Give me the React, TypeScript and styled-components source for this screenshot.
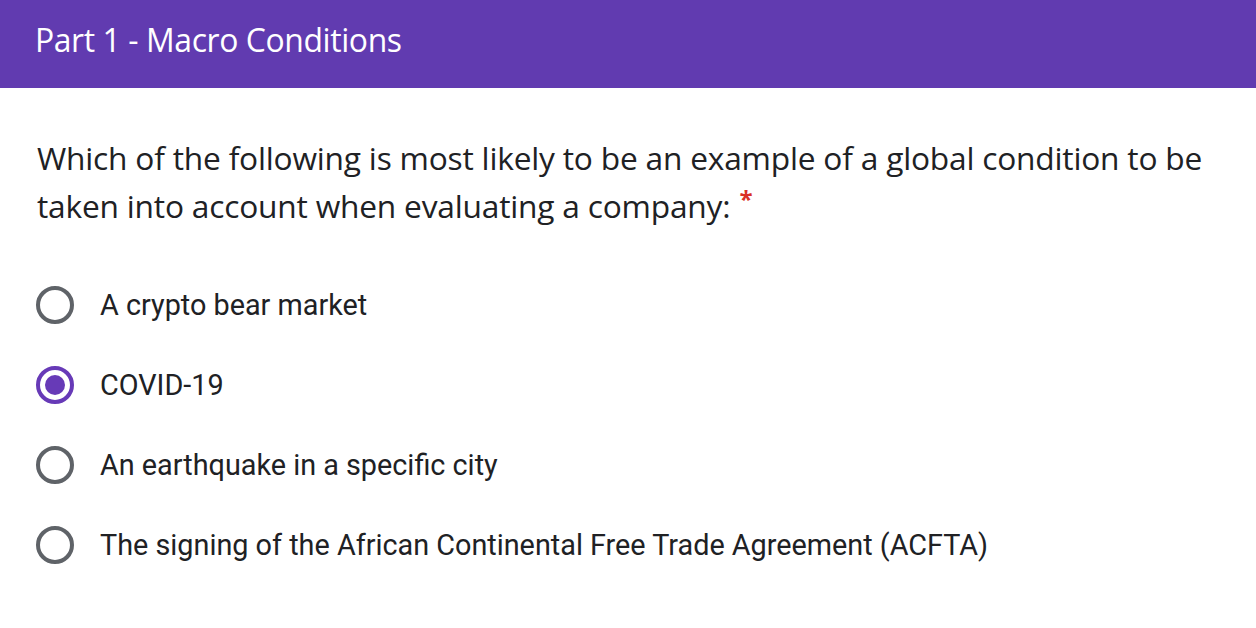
import React from "react";
import styled, { createGlobalStyle } from "styled-components";

const Global = createGlobalStyle`
  html, body { margin: 0; padding: 0; background: #fff; }
  body { width: 1256px; height: 628px; overflow: hidden; }
`;

const Page = styled.div`
  display: flex;
  flex-direction: column;
  width: 1256px;
  height: 628px;
  background: #fff;
`;

const Header = styled.header`
  flex: none;
  height: 88px;
  background: #613bb0;
  display: flex;
  align-items: center;
  padding: 0 0 10px 35px;
  box-sizing: border-box;
`;

const Title = styled.h1`
  margin: 0;
  font-family: "Open Sans", sans-serif;
  font-weight: 400;
  font-size: 31.9px;
  letter-spacing: -0.4px;
  color: #fff;
`;

const Question = styled.p`
  flex: none;
  margin: 46px 0 0 37px;
  width: 1190px;
  font-family: "Open Sans", sans-serif;
  font-size: 31.7px;
  line-height: 48px;
  letter-spacing: -0.2px;
  color: #202124;
`;

const Required = styled.span`
  display: inline-block;
  color: #d93025;
  margin-left: 9px;
  font-size: 24px;
  font-weight: 700;
  line-height: 20px;
  vertical-align: 10px;
`;

const Options = styled.div`
  flex: none;
  display: flex;
  flex-direction: column;
  margin-top: 35px;
  padding-left: 36px;
`;

const Option = styled.label`
  display: flex;
  align-items: center;
  height: 80px;
  gap: 26px;
  font-family: Roboto, sans-serif;
  font-size: 28.8px;
  color: #202124;
`;

const Radio = styled.span<{ $checked?: boolean }>`
  width: 38px;
  height: 38px;
  box-sizing: border-box;
  border-radius: 50%;
  border: 4px solid ${(p) => (p.$checked ? "#673ab7" : "#5f6368")};
  display: flex;
  align-items: center;
  justify-content: center;
  flex: none;
`;

const Dot = styled.span`
  width: 20px;
  height: 20px;
  border-radius: 50%;
  background: #673ab7;
`;

const options = [
  "A crypto bear market",
  "COVID-19",
  "An earthquake in a specific city",
  "The signing of the African Continental Free Trade Agreement (ACFTA)",
];

export default function App() {
  return (
    <Page>
      <Global />
      <Header>
        <Title>Part 1 - Macro Conditions</Title>
      </Header>
      <Question>
        Which of the following is most likely to be an example of a global condition to be taken into account when evaluating a company:
        <Required>*</Required>
      </Question>
      <Options>
        {options.map((o, i) => (
          <Option key={o}>
            <Radio $checked={i === 1}>{i === 1 && <Dot />}</Radio>
            {o}
          </Option>
        ))}
      </Options>
    </Page>
  );
}
